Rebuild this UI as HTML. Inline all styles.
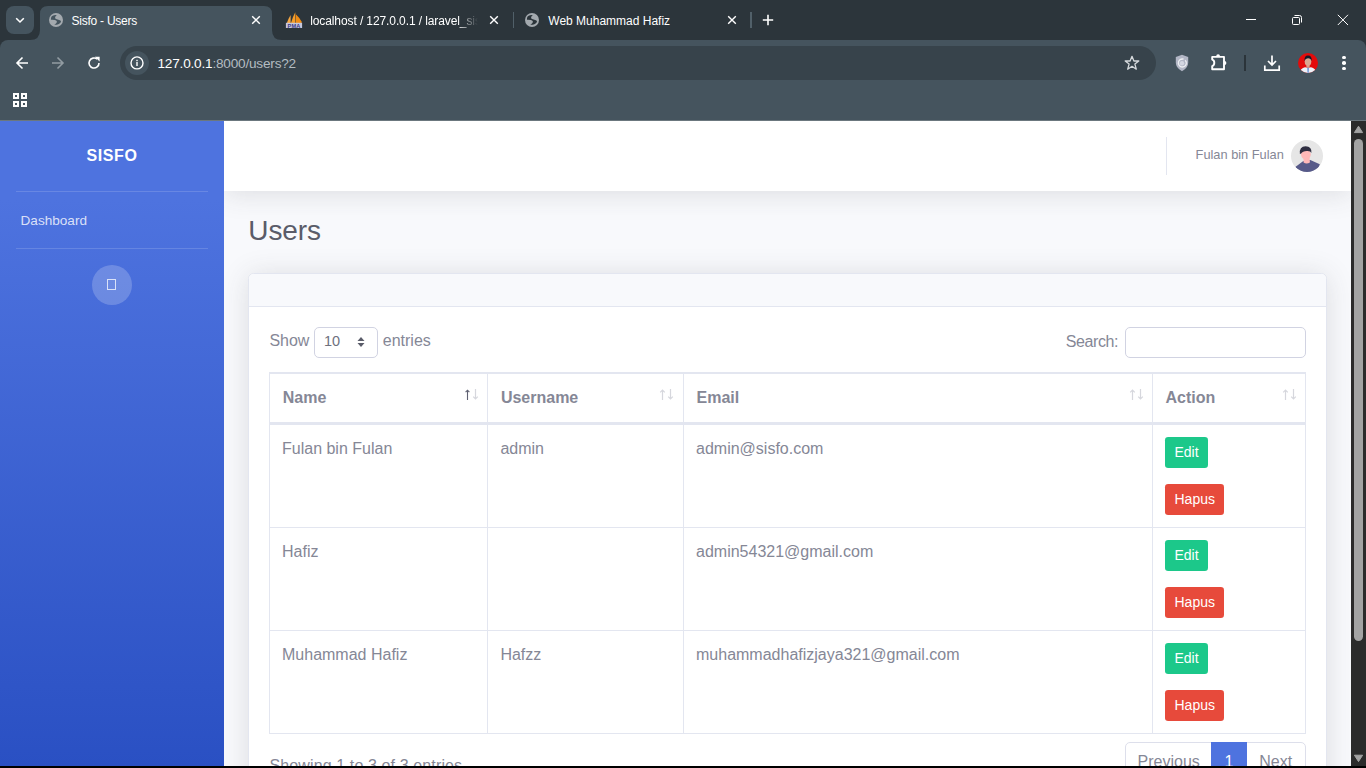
<!DOCTYPE html>
<html><head><meta charset="utf-8">
<style>
*{box-sizing:border-box;margin:0;padding:0}
html,body{width:1366px;height:768px;overflow:hidden;background:#000;font-family:"Liberation Sans",sans-serif}
.abs{position:absolute}
#tabstrip{position:absolute;left:0;top:0;width:1366px;height:60px;background:#2c353b}
#toolbar{position:absolute;left:0;top:40px;width:1366px;height:80px;background:#45545e;border-radius:8px 8px 0 0}
#sep{position:absolute;left:0;top:120px;width:1366px;height:1px;background:#6b777e}
#page{position:absolute;left:0;top:121px;width:1351px;height:645px;background:#f8f9fc;overflow:hidden}
#sb{position:absolute;left:1351px;top:121px;width:15px;height:645px;background:#2b2b2b}
#bottom{position:absolute;left:0;top:766px;width:1366px;height:2px;background:#000}
.ctext{color:#fff;font-size:12px;white-space:nowrap}
#sidebar{z-index:3;position:absolute;left:0;top:0;width:224px;height:645px;background:linear-gradient(180deg,#4e73df 0px,#4e73df 79px,#2a50c3 645px)}
#topbar{position:absolute;left:224px;top:0;width:1127px;height:70px;background:#fff;box-shadow:0 2.4px 28px 0 rgba(58,59,69,.15);z-index:2}
.card{position:absolute;left:248px;top:152px;width:1079px;height:700px;background:#fff;border:1px solid #e3e6f0;border-radius:5.6px;box-shadow:0 2.4px 28px 0 rgba(58,59,69,.15)}
.txt{color:#858796;font-size:16px;line-height:16px;white-space:nowrap}
.b{font-weight:700}
.btn{left:1165px;height:31px;padding:0 0 0 9.5px;border-radius:3.2px;color:#fff;font-size:14px;line-height:31px;white-space:nowrap}
.g{background:#1cc88a;width:43px}
.r{background:#e74a3b;width:59px}
</style></head><body>
<div id="tabstrip"></div>
<div id="toolbar"></div>
<div id="sep"></div>
<!-- tab search button -->
<div class="abs" style="left:6px;top:6px;width:28px;height:28px;border-radius:8px;background:#45545e"></div>
<svg class="abs" style="left:14px;top:14px" width="12" height="12" viewBox="0 0 12 12"><path d="M2.2 4.3L6 8L9.8 4.3" stroke="#fff" stroke-width="1.6" fill="none"/></svg>
<!-- active tab -->
<svg class="abs" style="left:30px;top:6px" width="253" height="34" viewBox="0 0 253 34"><path d="M0 34 Q10 34 10 24 L10 8 Q10 0 18 0 L234 0 Q242 0 242 8 L242 24 Q242 34 252 34 Z" fill="#45545e"/></svg>
<svg class="abs" style="left:49px;top:13px" width="14" height="14" viewBox="0 0 14 14"><circle cx="7" cy="7" r="7" fill="#a3a9ae"/><path d="M1.9 6.8 Q1.9 4.6 2.6 3.6 Q3.6 2.5 5 2.2 Q6.6 1.9 7.8 2.1 Q6.6 3 6.2 4 Q5.8 5 6.6 5.7 Q7.6 6.4 9.4 6.8 Q11 7.2 12 7.9 Q12 9.2 11.1 10.1 Q10 11.2 8.6 11.5 Q6.8 11.8 5.2 11.6 Q6.4 11 7.2 10.2 Q8.1 9.2 7.8 8.2 Q7.3 7.2 5.8 6.9 Q3.8 6.7 1.9 6.8Z" fill="#45545e"/></svg>
<div class="abs ctext" style="left:71.6px;top:12.6px;line-height:16px;letter-spacing:-0.25px">Sisfo - Users</div>
<svg class="abs" style="left:251px;top:15px" width="10" height="10" viewBox="0 0 10 10"><path d="M1.2 1.2L8.8 8.8M8.8 1.2L1.2 8.8" stroke="#fff" stroke-width="1.4"/></svg>
<!-- tab 2 -->
<svg class="abs" style="left:285px;top:11px" width="18" height="18" viewBox="0 0 18 18"><path d="M1.8 12.2 Q3 8 5.6 3.9 L5.6 12.2Z" fill="#f6a742"/><path d="M5.9 12.2 Q7.6 6 10.3 1.3 L10.4 12.2Z" fill="#f59d2a"/><path d="M10.8 12.2 L10.8 3.2 Q14.2 6.2 17 11.2 Q16 12.3 14.6 12.2Z" fill="#f08c14"/><rect x="0.9" y="11.8" width="16.2" height="5.2" fill="#c6c7dc"/><text x="9" y="16.6" font-size="5.6" font-family="Liberation Sans" fill="#3b3a86" text-anchor="middle" font-weight="700" letter-spacing="0.2">PMA</text></svg>
<div class="abs ctext" style="left:310.2px;top:12.6px;line-height:16px;width:170px;overflow:hidden;letter-spacing:-0.1px;-webkit-mask-image:linear-gradient(90deg,#000 148px,transparent 168px)">localhost / 127.0.0.1 / laravel_sisfo</div>
<svg class="abs" style="left:489px;top:15px" width="10" height="10" viewBox="0 0 10 10"><path d="M1.2 1.2L8.8 8.8M8.8 1.2L1.2 8.8" stroke="#fff" stroke-width="1.4"/></svg>
<div class="abs" style="left:512.5px;top:12px;width:1.5px;height:16px;background:#516069"></div>
<!-- tab 3 -->
<svg class="abs" style="left:525px;top:13px" width="14" height="14" viewBox="0 0 14 14"><circle cx="7" cy="7" r="7" fill="#a3a9ae"/><path d="M1.9 6.8 Q1.9 4.6 2.6 3.6 Q3.6 2.5 5 2.2 Q6.6 1.9 7.8 2.1 Q6.6 3 6.2 4 Q5.8 5 6.6 5.7 Q7.6 6.4 9.4 6.8 Q11 7.2 12 7.9 Q12 9.2 11.1 10.1 Q10 11.2 8.6 11.5 Q6.8 11.8 5.2 11.6 Q6.4 11 7.2 10.2 Q8.1 9.2 7.8 8.2 Q7.3 7.2 5.8 6.9 Q3.8 6.7 1.9 6.8Z" fill="#2b343a"/></svg>
<div class="abs ctext" style="left:548.3px;top:12.6px;line-height:16px">Web Muhammad Hafiz</div>
<svg class="abs" style="left:727px;top:15px" width="10" height="10" viewBox="0 0 10 10"><path d="M1.2 1.2L8.8 8.8M8.8 1.2L1.2 8.8" stroke="#fff" stroke-width="1.4"/></svg>
<div class="abs" style="left:750px;top:12px;width:1.5px;height:16px;background:#516069"></div>
<svg class="abs" style="left:762px;top:14px" width="12" height="12" viewBox="0 0 12 12"><path d="M6 0.8V11.2M0.8 6H11.2" stroke="#fff" stroke-width="1.6"/></svg>
<!-- window controls -->
<div class="abs" style="left:1246px;top:19px;width:10px;height:1px;background:#fff"></div>
<svg class="abs" style="left:1290px;top:13px" width="14" height="14" viewBox="0 0 14 14"><rect x="2.5" y="4.5" width="7" height="7" rx="1" stroke="#fff" stroke-width="1" fill="none"/><path d="M4.5 2.5 H9.5 Q11.5 2.5 11.5 4.5 V9.5" stroke="#fff" stroke-width="1" fill="none"/></svg>
<svg class="abs" style="left:1337px;top:14px" width="12" height="12" viewBox="0 0 12 12"><path d="M0.8 0.8L11 11M11 0.8L0.8 11" stroke="#fff" stroke-width="1"/></svg>
<!-- toolbar -->
<svg class="abs" style="left:14px;top:55px" width="16" height="16" viewBox="0 0 16 16"><path d="M14 8H3M8.5 2.5L3 8L8.5 13.5" stroke="#fff" stroke-width="1.6" fill="none"/></svg>
<svg class="abs" style="left:50px;top:55px" width="16" height="16" viewBox="0 0 16 16"><path d="M2 8H13M7.5 2.5L13 8L7.5 13.5" stroke="#929ca2" stroke-width="1.6" fill="none"/></svg>
<svg class="abs" style="left:86px;top:55px" width="16" height="16" viewBox="0 0 16 16"><path d="M13 8A5 5 0 1 1 11.2 4.2" stroke="#fff" stroke-width="1.6" fill="none"/><path d="M8.8 1.8H13.6V6.6Z" fill="#fff"/></svg>
<div class="abs" style="left:120px;top:46px;width:1036px;height:34px;border-radius:17px;background:#37434b"></div>
<div class="abs" style="left:125px;top:51px;width:24px;height:24px;border-radius:50%;background:#45545e"></div>
<svg class="abs" style="left:129px;top:55px" width="16" height="16" viewBox="0 0 16 16"><circle cx="8" cy="7.9" r="6" stroke="#fff" stroke-width="1.4" fill="none"/><rect x="7.3" y="6.9" width="1.4" height="4.1" fill="#fff"/><rect x="7.3" y="4.8" width="1.4" height="1.3" fill="#fff"/></svg>
<div class="abs" style="left:157.5px;top:56.8px;font-size:13.6px;line-height:13.6px;white-space:nowrap;letter-spacing:-0.2px;color:#b4bcc1"><span style="color:#fff">127.0.0.1</span>:8000/users?2</div>
<svg class="abs" style="left:1124px;top:55px" width="16" height="16" viewBox="0 0 16 16"><path d="M8 1.3L9.9 6H14.8L10.9 9.1L12.3 14.2L8 11.3L3.7 14.2L5.1 9.1L1.2 6H6.1Z" stroke="#d5d9dc" stroke-width="1.3" fill="none" stroke-linejoin="round"/></svg>
<svg class="abs" style="left:1174px;top:54px" width="16" height="18" viewBox="0 0 16 18"><path d="M8 0.8L14.2 3V8.5Q14.2 14 8 17.2Q1.8 14 1.8 8.5V3Z" fill="#b3b7c6"/><path d="M11.2 6.2 A4 4 0 1 1 9.6 5.2" stroke="#eef0f4" stroke-width="1.3" fill="none"/><circle cx="8" cy="9.2" r="2.2" fill="#d4d7e2"/></svg>
<svg class="abs" style="left:1210px;top:54px" width="18" height="18" viewBox="0 0 18 18"><path d="M2.2 2.9 H14.0 V15.2 H2.2 V12.1 C5 11.5 5 6.2 2.2 5.6 Z" stroke="#fff" stroke-width="1.9" fill="none" stroke-linejoin="round"/><path d="M6.2 2.2 A1.9 1.9 0 0 1 10 2.2 Z" fill="#fff"/><path d="M14.5 7.1 A1.9 1.9 0 0 1 14.5 10.9 Z" fill="#fff"/></svg>
<div class="abs" style="left:1244px;top:55px;width:2px;height:16px;background:#2b343a"></div>
<svg class="abs" style="left:1263px;top:54px" width="18" height="18" viewBox="0 0 18 18"><path d="M9 1.5V11M5 7L9 11L13 7" stroke="#fff" stroke-width="1.7" fill="none"/><path d="M1.8 11.5V16.2H16.2V11.5" stroke="#fff" stroke-width="1.7" fill="none"/></svg>
<svg class="abs" style="left:1298px;top:53px" width="20" height="20" viewBox="0 0 20 20"><defs><clipPath id="pc"><circle cx="10" cy="10" r="10"/></clipPath></defs><circle cx="10" cy="10" r="10" fill="#e30b0b"/><g clip-path="url(#pc)"><path d="M1 21Q2 15.6 7 14.2L10 14.8L13 14.2Q18 15.6 19 21Z" fill="#eef2f8"/><path d="M9.3 14.6L9.6 21H10.6L10.8 14.6Z" fill="#5c8ad6"/><rect x="8.4" y="11" width="3.2" height="3.6" fill="#d6a089"/><ellipse cx="10" cy="8.6" rx="3.3" ry="4.3" fill="#dba791"/><path d="M6.5 8.2Q6 2.4 10 2.5Q14.2 2.4 13.6 8.2Q13 5.4 10 5.2Q7.2 5.4 6.5 8.2Z" fill="#141a2a"/></g></svg>
<div class="abs" style="left:1342px;top:55.7px;width:3.6px;height:3.6px;border-radius:50%;background:#fff"></div>
<div class="abs" style="left:1342px;top:61.2px;width:3.6px;height:3.6px;border-radius:50%;background:#fff"></div>
<div class="abs" style="left:1342px;top:66.7px;width:3.6px;height:3.6px;border-radius:50%;background:#fff"></div>
<!-- bookmarks bar -->
<div class="abs" style="left:13px;top:93px;width:6px;height:6px;border:2px solid #fff"></div><div class="abs" style="left:21px;top:93px;width:6px;height:6px;border:2px solid #fff"></div><div class="abs" style="left:13px;top:101px;width:6px;height:6px;border:2px solid #fff"></div><div class="abs" style="left:21px;top:101px;width:6px;height:6px;border:2px solid #fff"></div>
<div id="page">
  <div id="sidebar">
    <div class="abs" style="left:0;width:224px;top:26.8px;text-align:center;font-size:16px;font-weight:700;color:#fff;line-height:16px;letter-spacing:0.6px;padding-left:0px">SISFO</div>
    <div class="abs" style="left:16px;top:70px;width:192px;height:1px;background:rgba(255,255,255,.15)"></div>
    <div class="abs" style="left:20.5px;top:92.5px;font-size:13.6px;line-height:13.6px;color:rgba(255,255,255,.8);white-space:nowrap">Dashboard</div>
    <div class="abs" style="left:16px;top:127px;width:192px;height:1px;background:rgba(255,255,255,.15)"></div>
    <div class="abs" style="left:92px;top:144px;width:40px;height:40px;border-radius:50%;background:rgba(255,255,255,.2)"></div>
    <div class="abs" style="left:107px;top:158px;width:9px;height:11px;border:1px solid rgba(255,255,255,.75)"></div>
  </div>
  <div id="topbar">
    <div class="abs" style="left:942px;top:16px;width:1px;height:38px;background:#e3e6f0"></div>
    <div class="abs" style="left:971.6px;top:27.8px;font-size:12.8px;line-height:12.8px;color:#858796;white-space:nowrap">Fulan bin Fulan</div>
    <svg class="abs" style="left:1067px;top:19px" width="32" height="32" viewBox="0 0 32 32">
      <defs><clipPath id="avc"><circle cx="16" cy="16" r="16"/></clipPath></defs>
      <circle cx="16" cy="16" r="16" fill="#e6e6e6"/>
      <g clip-path="url(#avc)">
        <path d="M4.3 27 L12 21.2 Q15.5 19.6 19.3 20 L28.8 24.2 L27 30 Q20 34 12 32.5 Q7 31 4.3 27Z" fill="#575a89"/>
        <path d="M12.4 16 L18.4 16 L18.9 22.6 Q15.5 24.6 12.6 22.6Z" fill="#ffb8b8"/>
        <ellipse cx="14.9" cy="14.6" rx="4.9" ry="4.7" fill="#ffb8b8"/>
        <path d="M8.9 13.9 Q8.1 6.2 14.6 6.2 Q21 6.2 20.4 12.9 Q19.6 10.9 16.4 11 Q11.6 10.8 10.2 13.6 Z" fill="#2f2e41"/>
      </g>
    </svg>
  </div>
  <div class="abs" style="left:248.3px;top:95.8px;font-size:28px;line-height:28px;color:#5a5c69;white-space:nowrap;letter-spacing:-0.1px">Users</div>
  <div class="card">
    <div class="abs" style="left:0;top:0;width:1077px;height:33px;background:#f8f9fc;border-bottom:1px solid #e3e6f0;border-radius:5px 5px 0 0"></div>
  </div>
  <div id="tablearea">
    <div class="abs txt" style="left:269.4px;top:211.7px;line-height:16px">Show</div>
    <div class="abs" style="left:314px;top:206px;width:64px;height:31px;border:1px solid #d1d3e2;border-radius:5px;background:#fff"></div>
    <div class="abs" style="left:324px;top:212.3px;font-size:14.5px;line-height:16px;color:#6e707e">10</div>
    <svg class="abs" style="left:356px;top:214px" width="10" height="14" viewBox="0 0 10 14"><path d="M1.5 6 L5 2 L8.5 6Z M1.5 8 L5 12 L8.5 8Z" fill="#5a5c69"/></svg>
    <div class="abs txt" style="left:382.8px;top:211.7px;line-height:16px">entries</div>
    <div class="abs txt" style="left:1065.8px;top:212.6px;line-height:16px;letter-spacing:-0.4px">Search:</div>
    <div class="abs" style="left:1125px;top:206px;width:181px;height:31px;border:1px solid #d1d3e2;border-radius:5px;background:#fff"></div>
  </div>
  <div id="table">
    <!-- borders -->
    <div class="abs" style="left:269px;top:251px;width:1037px;height:2px;background:#e3e6f0"></div>
    <div class="abs" style="left:269px;top:301px;width:1037px;height:3px;background:#e3e6f0"></div>
    <div class="abs" style="left:269px;top:406px;width:1037px;height:1px;background:#e3e6f0"></div>
    <div class="abs" style="left:269px;top:509px;width:1037px;height:1px;background:#e3e6f0"></div>
    <div class="abs" style="left:269px;top:612px;width:1037px;height:1px;background:#e3e6f0"></div>
    <div class="abs" style="left:269px;top:251px;width:1px;height:362px;background:#e3e6f0"></div>
    <div class="abs" style="left:487px;top:251px;width:1px;height:362px;background:#e3e6f0"></div>
    <div class="abs" style="left:683px;top:251px;width:1px;height:362px;background:#e3e6f0"></div>
    <div class="abs" style="left:1152px;top:251px;width:1px;height:362px;background:#e3e6f0"></div>
    <div class="abs" style="left:1305px;top:251px;width:1px;height:362px;background:#e3e6f0"></div>
    <!-- header -->
    <div class="abs txt b" style="left:282.8px;top:268.8px">Name</div>
    <div class="abs txt b" style="left:500.9px;top:268.8px">Username</div>
    <div class="abs txt b" style="left:696.5px;top:268.8px">Email</div>
    <div class="abs txt b" style="left:1165.5px;top:268.8px">Action</div>
    <svg class="abs" style="left:463px;top:267px" width="20" height="13" viewBox="0 0 20 13"><path d="M4.5 12V2.2 M2.6 4.1L4.5 2.2L6.4 4.1" stroke="#5f6172" stroke-width="1.1" fill="none"/><path d="M12.5 1V11 M10.2 8.7L12.5 11L14.8 8.7" stroke="#d6d7dd" stroke-width="1.2" fill="none"/></svg>
    <svg class="abs" style="left:658px;top:267px" width="20" height="13" viewBox="0 0 20 13"><path d="M4.5 12V2 M2.2 4.3L4.5 2L6.8 4.3" stroke="#d6d7dd" stroke-width="1.2" fill="none"/><path d="M12.5 1V11 M10.2 8.7L12.5 11L14.8 8.7" stroke="#d6d7dd" stroke-width="1.2" fill="none"/></svg>
    <svg class="abs" style="left:1128px;top:267px" width="20" height="13" viewBox="0 0 20 13"><path d="M4.5 12V2 M2.2 4.3L4.5 2L6.8 4.3" stroke="#d6d7dd" stroke-width="1.2" fill="none"/><path d="M12.5 1V11 M10.2 8.7L12.5 11L14.8 8.7" stroke="#d6d7dd" stroke-width="1.2" fill="none"/></svg>
    <svg class="abs" style="left:1281px;top:267px" width="20" height="13" viewBox="0 0 20 13"><path d="M4.5 12V2 M2.2 4.3L4.5 2L6.8 4.3" stroke="#d6d7dd" stroke-width="1.2" fill="none"/><path d="M12.5 1V11 M10.2 8.7L12.5 11L14.8 8.7" stroke="#d6d7dd" stroke-width="1.2" fill="none"/></svg>
    <!-- rows -->
    <div class="abs txt" style="left:282px;top:320px">Fulan bin Fulan</div>
    <div class="abs txt" style="left:500.4px;top:320px">admin</div>
    <div class="abs txt" style="left:696px;top:320px">admin@sisfo.com</div>
    <div class="abs txt" style="left:282px;top:423px">Hafiz</div>
    <div class="abs txt" style="left:696px;top:423px">admin54321@gmail.com</div>
    <div class="abs txt" style="left:282px;top:526px">Muhammad Hafiz</div>
    <div class="abs txt" style="left:500.4px;top:526px">Hafzz</div>
    <div class="abs txt" style="left:696px;top:526px">muhammadhafizjaya321@gmail.com</div>
    <!-- buttons -->
    <div class="abs btn g" style="top:316px">Edit</div>
    <div class="abs btn r" style="top:363px">Hapus</div>
    <div class="abs btn g" style="top:419px">Edit</div>
    <div class="abs btn r" style="top:466px">Hapus</div>
    <div class="abs btn g" style="top:522px">Edit</div>
    <div class="abs btn r" style="top:569px">Hapus</div>
  </div>
  <div class="abs txt" style="left:269.5px;top:636.7px;letter-spacing:0.12px">Showing 1 to 3 of 3 entries</div>
  <div class="abs" style="left:1125px;top:621px;width:181px;height:40px;border:1px solid #dddfeb;border-radius:5px;background:#fff"></div>
  <div class="abs" style="left:1211px;top:621px;width:36px;height:40px;background:#4e73df"></div>
  <div class="abs txt" style="left:1137.6px;top:632.8px">Previous</div>
  <div class="abs" style="left:1211px;width:36px;text-align:center;top:632.8px;font-size:16px;line-height:16px;color:#fff">1</div>
  <div class="abs txt" style="left:1259.2px;top:632.8px">Next</div>
</div>
<div id="sb"><svg class="abs" style="left:0;top:0" width="15" height="645" viewBox="0 0 15 645"><path d="M3.4 11.6L7.5 5.2L11.6 11.6Z" fill="#a3a3a3" stroke="#a3a3a3" stroke-width="1" stroke-linejoin="round"/><rect x="3" y="18" width="9" height="502" rx="4.5" fill="#a3a3a3"/><path d="M3.4 634.2L7.5 640.6L11.6 634.2Z" fill="#a3a3a3" stroke="#a3a3a3" stroke-width="1" stroke-linejoin="round"/></svg></div>
<div id="bottom"></div>
</body></html>
